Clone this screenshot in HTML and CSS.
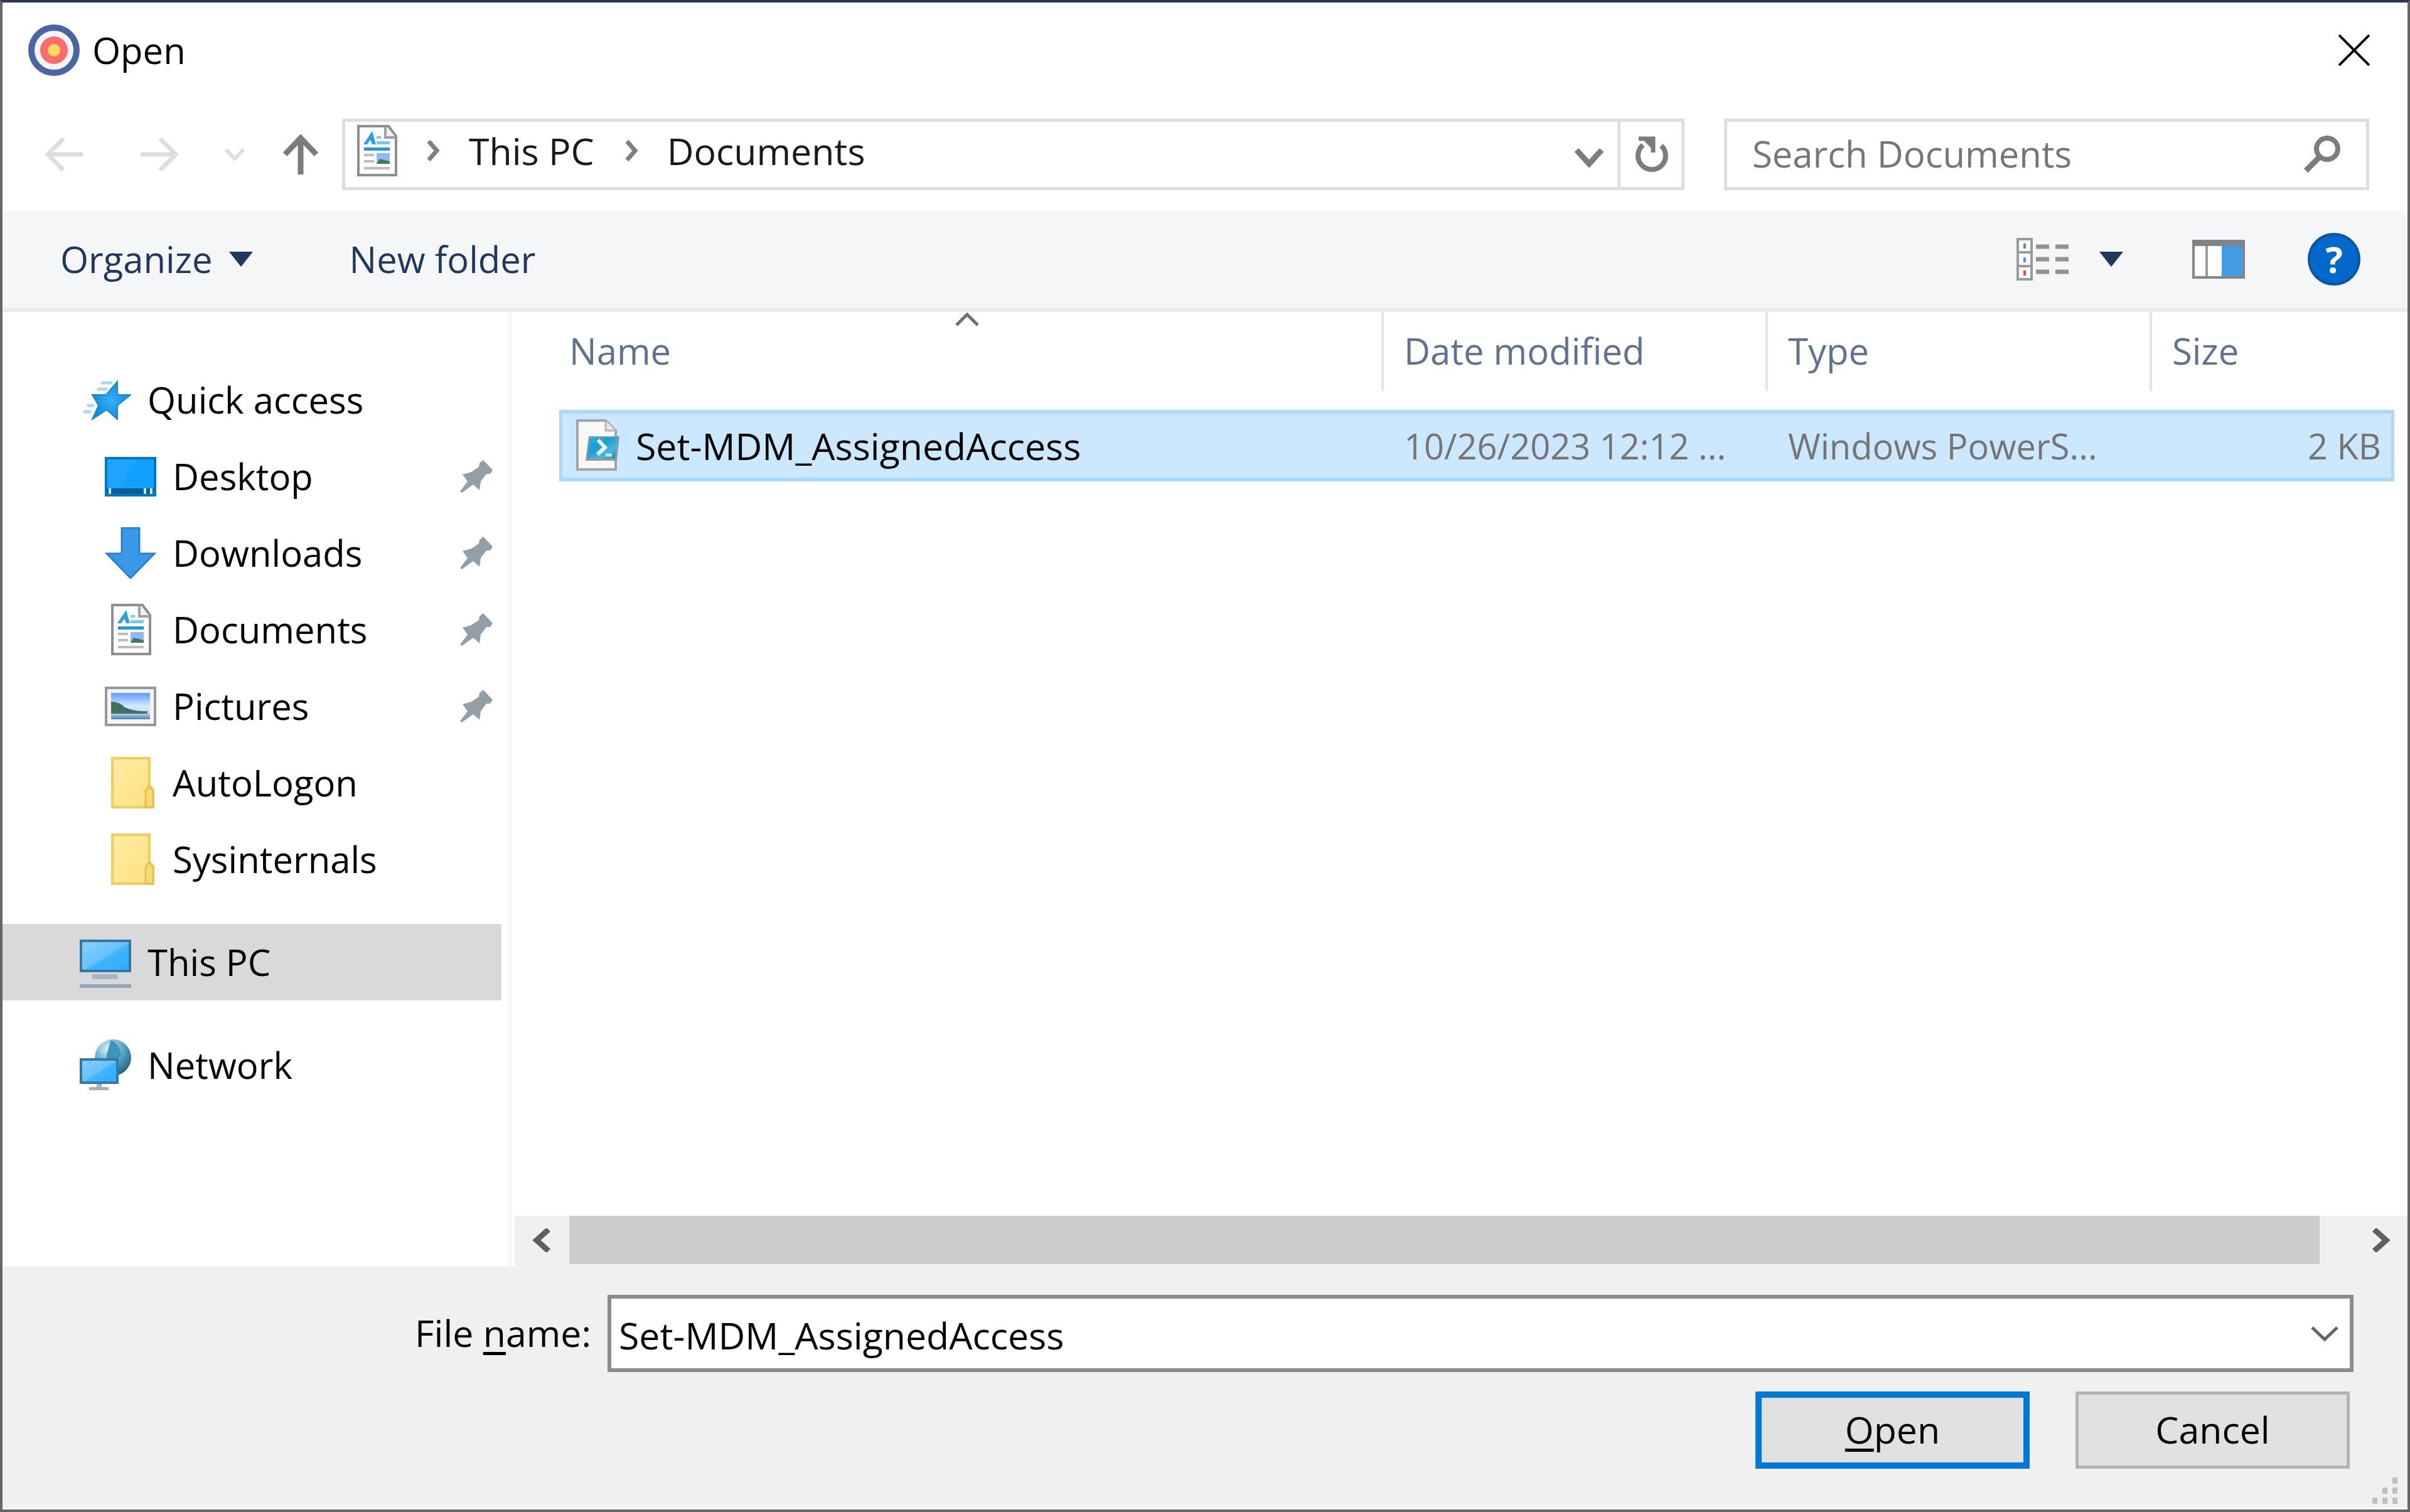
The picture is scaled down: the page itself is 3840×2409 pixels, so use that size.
FILE: index.html
```
<!DOCTYPE html>
<html lang="en">
<head>
    <meta charset="UTF-8">
    <meta name="viewport" content="width=device-width, initial-scale=1.0">
    <title>Open</title>
    <link rel="stylesheet" href="styles.css">
</head>
<body>
    <!-- Shared icons -->
    <svg class="sprite" aria-hidden="true">
        <defs>
            <linearGradient id="screen" x1="0" y1="0" x2="1" y2="1">
                <stop offset="0" stop-color="#8ad0ff"/>
                <stop offset="0.5" stop-color="#66c2ff"/>
                <stop offset="0.55" stop-color="#3fb4ff"/>
                <stop offset="1" stop-color="#2caaff"/>
            </linearGradient>
            <linearGradient id="sky" x1="0" y1="0" x2="0" y2="1">
                <stop offset="0" stop-color="#5c9bff"/>
                <stop offset="0.5" stop-color="#d3e8fc"/>
                <stop offset="0.75" stop-color="#c8e0f2"/>
                <stop offset="1" stop-color="#4a80b8"/>
            </linearGradient>
            <linearGradient id="folder" x1="0" y1="0" x2="1" y2="1">
                <stop offset="0" stop-color="#ffeba6"/>
                <stop offset="1" stop-color="#ffe07d"/>
            </linearGradient>
            <radialGradient id="globe" cx="0.35" cy="0.25" r="0.8">
                <stop offset="0" stop-color="#d6f0f5"/>
                <stop offset="0.5" stop-color="#5eaccd"/>
                <stop offset="1" stop-color="#20607e"/>
            </radialGradient>
            <radialGradient id="star" cx="0.5" cy="0.5" r="0.5">
                <stop offset="0" stop-color="#33b1ff"/>
                <stop offset="1" stop-color="#148bd4"/>
            </radialGradient>
            <linearGradient id="shell" x1="0" y1="0" x2="1" y2="1">
                <stop offset="0" stop-color="#2bb4dc"/>
                <stop offset="0.4" stop-color="#1a9fd0"/>
                <stop offset="0.7" stop-color="#48b8e0"/>
                <stop offset="1" stop-color="#0a86bd"/>
            </linearGradient>
        </defs>
        <symbol id="icon-document" viewBox="0 0 82 82">
            <path d="M12 2H60L72 18V80H12Z" fill="#fcfcfc" stroke="#8e8e8e" stroke-width="4"/>
            <path d="M55 2V20H72" fill="#f0f0f0" stroke="#a0a0a0" stroke-width="4"/>
            <path d="M20 31L34 10L40 31H34L31 24L26 31Z" fill="#2c9fe0"/>
            <path d="M41 18H48V22H41ZM41 26H62V31H41Z" fill="#7cc6f0"/>
            <path d="M21 36H62V41H21Z" fill="#2196dc"/>
            <path d="M21 46H37V50H21ZM21 56H37V60H21ZM21 67H62V71H21Z" fill="#bdbdbd"/>
            <path d="M41 45H62V62H41Z" fill="#8db8fa"/>
            <path d="M41 62L46 54L62 58V62Z" fill="#3f7a5c"/>
        </symbol>
        <symbol id="icon-folder" viewBox="0 0 82 82">
            <path d="M12 2H71V46L77 52V80H12Z" fill="url(#folder)" stroke="#efce5c" stroke-width="4"/>
            <path d="M65 80V54L70 46L77 54V80Z" fill="#f7da75" stroke="#e6c04c" stroke-width="3"/>
        </symbol>
        <symbol id="icon-pin" viewBox="0 0 52 52">
            <path d="M37 0L52 16L48 22H42L33 34L31 48L21 39L3 52L0 50L12 34L4 23L18 19L30 11L31 5Z" fill="#939fa6"/>
        </symbol>
        <symbol id="icon-crumb" viewBox="0 0 22 36">
            <path d="M4 3L17 18L4 33" fill="none" stroke="#808080" stroke-width="7"/>
        </symbol>
    </svg>

    <div class="dialog">
        <header class="title-bar">
            <svg class="icon" viewBox="0 0 82 82">
                <circle cx="41" cy="41" r="36" fill="#f3f5fb" stroke="#4a65a3" stroke-width="10"/>
                <circle cx="41" cy="41" r="22" fill="#ff6b6b"/>
                <circle cx="41" cy="41" r="10" fill="#ffd95c"/>
            </svg>
            <h1 class="title">Open</h1>
            <button class="icon-btn" aria-label="Close">
                <svg width="50" height="50" viewBox="0 0 50 50">
                    <path d="M1 1L49 49M49 1L1 49" stroke="#000" stroke-width="4"/>
                </svg>
            </button>
        </header>

        <div class="nav-bar">
            <div class="nav-buttons">
                <button class="icon-btn" aria-label="Back">
                    <svg width="60" height="58" viewBox="0 0 60 58">
                        <path d="M60 29H5M29 4L4 29L29 54" fill="none" stroke="#dedede" stroke-width="7"/>
                    </svg>
                </button>
                <button class="icon-btn back-gap" aria-label="Forward">
                    <svg width="60" height="58" viewBox="0 0 60 58">
                        <path d="M0 29H55M31 4L56 29L31 54" fill="none" stroke="#dedede" stroke-width="7"/>
                    </svg>
                </button>
                <button class="icon-btn recent-gap" aria-label="Recent locations">
                    <svg width="32" height="22" viewBox="0 0 32 22">
                        <path d="M2 3L16 18L30 3" fill="none" stroke="#dedede" stroke-width="6"/>
                    </svg>
                </button>
                <button class="icon-btn up-gap" aria-label="Up">
                    <svg width="58" height="64" viewBox="0 0 58 64">
                        <path d="M29 64V6M4 32L29 6L54 32" fill="none" stroke="#7c7c7c" stroke-width="9"/>
                    </svg>
                </button>
            </div>
            <div class="address">
                <nav class="crumbs">
                    <svg class="icon"><use href="#icon-document"/></svg>
                    <svg class="crumb-arrow"><use href="#icon-crumb"/></svg>
                    <a class="crumb" href="#">This PC</a>
                    <svg class="crumb-arrow"><use href="#icon-crumb"/></svg>
                    <a class="crumb" href="#">Documents</a>
                </nav>
                <button class="icon-btn address-drop" aria-label="Previous locations">
                    <svg width="48" height="34" viewBox="0 0 48 34">
                        <path d="M4 5L24 27L44 5" fill="none" stroke="#7c7c7c" stroke-width="9"/>
                    </svg>
                </button>
                <button class="icon-btn refresh" aria-label="Refresh">
                    <svg width="54" height="58" viewBox="0 0 54 58">
                        <path d="M43 15A22 22 0 1 1 14 14" fill="none" stroke="#7c7c7c" stroke-width="8"/>
                        <path d="M7 4H30V26" fill="none" stroke="#7c7c7c" stroke-width="7"/>
                        <path d="M12 4H30V22Z" fill="#7c7c7c"/>
                    </svg>
                </button>
            </div>
            <div class="search">
                <input class="search-input" type="text" placeholder="Search Documents" aria-label="Search Documents">
                <button class="icon-btn" aria-label="Search">
                    <svg width="60" height="60" viewBox="0 0 60 60">
                        <circle cx="38" cy="21" r="17" fill="none" stroke="#7c7c7c" stroke-width="8"/>
                        <path d="M26 34L4 56" stroke="#7c7c7c" stroke-width="9"/>
                    </svg>
                </button>
            </div>
        </div>

        <div class="toolbar">
            <button class="tool-btn">Organize
                <svg class="triangle" viewBox="0 0 38 24"><path d="M0 0H38L19 24Z" fill="#1e395b"/></svg>
            </button>
            <button class="tool-btn">New folder</button>
            <div class="view-tools">
                <button class="icon-btn view-btn" aria-label="Change your view">
                    <svg width="84" height="68" viewBox="0 0 84 68">
                        <path d="M2 2H24V66H2ZM2 23H24M2 45H24" fill="#fff" stroke="#9a9a9a" stroke-width="4"/>
                        <path d="M11 9H15V17H11Z" fill="#4d9c83"/>
                        <path d="M11 31H15V39H11Z" fill="#4f9cff"/>
                        <path d="M11 52H15V60H11Z" fill="#e84848"/>
                        <path d="M31 14H52M62 14H83M31 34H52M62 34H83M31 54H52M62 54H83" stroke="#929292" stroke-width="7"/>
                    </svg>
                    <svg class="triangle" viewBox="0 0 38 24"><path d="M0 0H38L19 24Z" fill="#1e395b"/></svg>
                </button>
                <button class="icon-btn" aria-label="Show the preview pane">
                    <svg width="84" height="62" viewBox="0 0 84 62">
                        <path d="M2 2H82V60H2Z" fill="#fff" stroke="#858585" stroke-width="4"/>
                        <path d="M0 0H84V10H0Z" fill="#7f8486"/>
                        <path d="M23 10V58" stroke="#9a9a9a" stroke-width="4"/>
                        <path d="M47 10H80V58H47Z" fill="#419ce4"/>
                    </svg>
                </button>
                <button class="help" aria-label="Get help">?</button>
            </div>
        </div>

        <main class="content">
            <nav class="sidebar">
                <a class="place" href="#">
                    <svg class="icon" viewBox="0 0 82 82">
                        <path d="M60 12V33H81L60 50V72L43 57L20 72L30 50L20 33H42Z" fill="url(#star)" stroke="#148bd4" stroke-width="2"/>
                        <path d="M34 14H52M28 24H44M12 50H23M6 60H18" stroke="#a8d8f5" stroke-width="5"/>
                    </svg>
                    Quick access
                </a>
                <a class="place nested" href="#">
                    <svg class="icon" viewBox="0 0 82 82">
                        <path d="M2 12H80V71H2Z" fill="#1fa5ff" stroke="#0077c2" stroke-width="4"/>
                        <path d="M50 14H78V58H26Z" fill="#12a0ff"/>
                        <path d="M4 60H78V69H4Z" fill="#055f9b"/>
                        <path d="M6 60H10V69H6ZM62 60H66V69H62ZM72 60H76V69H72Z" fill="#c8e8ff"/>
                    </svg>
                    Desktop
                    <svg class="pin"><use href="#icon-pin"/></svg>
                </a>
                <a class="place nested" href="#">
                    <svg class="icon" viewBox="0 0 82 82">
                        <path d="M27 1H55V42H79L41 81L3 42H27Z" fill="#3b98e8" stroke="#2c82d0" stroke-width="3"/>
                    </svg>
                    Downloads
                    <svg class="pin"><use href="#icon-pin"/></svg>
                </a>
                <a class="place nested" href="#">
                    <svg class="icon"><use href="#icon-document"/></svg>
                    Documents
                    <svg class="pin"><use href="#icon-pin"/></svg>
                </a>
                <a class="place nested" href="#">
                    <svg class="icon" viewBox="0 0 82 82">
                        <path d="M2 12H80V71H2Z" fill="#f4f4f4" stroke="#979797" stroke-width="4"/>
                        <path d="M10 20H72V62H10Z" fill="url(#sky)"/>
                        <path d="M10 34Q24 34 32 43Q48 50 68 49V53H10Z" fill="#3f7060"/>
                    </svg>
                    Pictures
                    <svg class="pin"><use href="#icon-pin"/></svg>
                </a>
                <a class="place nested" href="#">
                    <svg class="icon"><use href="#icon-folder"/></svg>
                    AutoLogon
                </a>
                <a class="place nested" href="#">
                    <svg class="icon"><use href="#icon-folder"/></svg>
                    Sysinternals
                </a>
                <a class="place root selected" href="#">
                    <svg class="icon" viewBox="0 0 82 82">
                        <path d="M2 7H80V55H2Z" fill="url(#screen)" stroke="#35789f" stroke-width="4"/>
                        <path d="M20 60H61V68H20Z" fill="#a9b5c2"/>
                        <path d="M0 76H82V82H0Z" fill="#94a6b8"/>
                    </svg>
                    This PC
                </a>
                <a class="place root" href="#">
                    <svg class="icon" viewBox="0 0 82 82">
                        <circle cx="53" cy="29" r="29" fill="url(#globe)"/>
                        <path d="M50 1Q64 8 66 26L54 36L42 28L46 14Z" fill="#3f93ba"/>
                        <path d="M2 32H60V69H2Z" fill="url(#screen)" stroke="#35789f" stroke-width="4"/>
                        <path d="M27 71H35V76H46V81H15V76H27Z" fill="#9fb0c0"/>
                    </svg>
                    Network
                </a>
            </nav>

            <section class="files">
                <table class="file-table">
                    <colgroup>
                        <col>
                        <col class="col-wide">
                        <col class="col-wide">
                        <col class="col-size">
                    </colgroup>
                    <thead>
                        <tr>
                            <th>
                                <div class="head-cell head-name">Name
                                    <svg class="sort-arrow" viewBox="0 0 38 24"><path d="M2 21L19 4L36 21" fill="none" stroke="#707070" stroke-width="5"/></svg>
                                </div>
                            </th>
                            <th><div class="head-cell">Date modified</div></th>
                            <th><div class="head-cell">Type</div></th>
                            <th><div class="head-cell head-last">Size</div></th>
                        </tr>
                    </thead>
                    <tbody>
                        <tr>
                            <td>
                                <div class="file-name">
                                    <svg width="70" height="84" viewBox="0 0 70 84">
                                        <path d="M3 2H48L64 18V80H3Z" fill="#f8f8f6" stroke="#a0a4a6" stroke-width="4"/>
                                        <path d="M48 2V18H64" fill="#e4e6e8" stroke="#b4b8ba" stroke-width="3"/>
                                        <path d="M21 27H70L66 66H16Z" fill="#8b9ba5"/>
                                        <path d="M23 29H67L63 62H19Z" fill="url(#shell)"/>
                                        <path d="M36 33L47 45L35 56" fill="none" stroke="#f2fbff" stroke-width="6"/>
                                        <path d="M48 57H58" stroke="#bfe6f5" stroke-width="5"/>
                                    </svg>
                                    Set-MDM_AssignedAccess
                                </div>
                            </td>
                            <td class="meta">10/26/2023 12:12 ...</td>
                            <td class="meta">Windows PowerS...</td>
                            <td class="meta size">2 KB</td>
                        </tr>
                    </tbody>
                </table>

                <div class="scrollbar">
                    <button class="icon-btn scroll-btn" aria-label="Scroll left">
                        <svg width="32" height="38" viewBox="0 0 32 38">
                            <path d="M28 2L9 19L28 36" fill="none" stroke="#606060" stroke-width="9"/>
                        </svg>
                    </button>
                    <div class="scroll-track"><div class="scroll-thumb"></div></div>
                    <button class="icon-btn scroll-btn" aria-label="Scroll right">
                        <svg width="32" height="38" viewBox="0 0 32 38">
                            <path d="M4 2L23 19L4 36" fill="none" stroke="#606060" stroke-width="9"/>
                        </svg>
                    </button>
                </div>
            </section>
        </main>

        <footer class="footer">
            <div class="file-field">
                <label class="file-label" for="file-name">File <u>n</u>ame:</label>
                <div class="combo">
                    <input class="combo-input" id="file-name" type="text" value="Set-MDM_AssignedAccess" spellcheck="false">
                    <button class="icon-btn" aria-label="Show recent names">
                        <svg width="44" height="26" viewBox="0 0 44 26">
                            <path d="M2 3L22 22L42 3" fill="none" stroke="#666" stroke-width="5"/>
                        </svg>
                    </button>
                </div>
            </div>
            <div class="actions">
                <button class="btn btn-default"><u>O</u>pen</button>
                <button class="btn">Cancel</button>
            </div>
            <svg class="grip" viewBox="0 0 42 44">
                <path d="M32 0H40V10H32ZM16 16H24V26H16ZM32 16H40V26H32ZM0 32H8V42H0ZM16 32H24V42H16ZM32 32H40V42H32Z" fill="#bfbfbf"/>
            </svg>
        </footer>
    </div>
</body>
</html>
```

FILE: styles.css
```
* {
    margin: 0;
    padding: 0;
    box-sizing: border-box;
}

body {
    font-family: 'Open Sans', 'Noto Sans', sans-serif;
    font-size: 59px;
    line-height: 80px;
    color: #000;
    background: #fff;
}

button,
input {
    font: inherit;
    color: inherit;
    background: none;
    border: none;
    outline: none;
}

a {
    color: inherit;
    text-decoration: none;
}

svg {
    display: block;
    flex: none;
}

u {
    text-decoration-thickness: 5px;
    text-underline-offset: 8px;
}

.sprite {
    position: absolute;
    width: 0;
    height: 0;
}

.icon {
    width: 82px;
    height: 82px;
}

.icon-btn {
    display: flex;
    align-items: center;
    justify-content: center;
    flex: none;
}

.dialog {
    display: flex;
    flex-direction: column;
    min-height: 100vh;
    border: 4px solid #666;
    border-top-color: #2c3a4e;
}

/* Title bar */
.title-bar {
    display: flex;
    align-items: center;
    height: 152px;
    padding: 0 60px 0 41px;
}

.title {
    flex: 1;
    margin-left: 20px;
    font-size: 58px;
    font-weight: 400;
}

/* Navigation */
.nav-bar {
    display: flex;
    align-items: center;
    height: 180px;
    padding: 0 61px 0 68px;
}

.nav-buttons {
    display: flex;
    align-items: center;
    width: 473px;
}

.back-gap {
    margin-left: 92px;
}

.recent-gap {
    margin-left: 74px;
}

.up-gap {
    margin-left: 60px;
}

.address,
.search {
    display: flex;
    align-items: center;
    height: 114px;
    border: 5px solid #dedede;
}

.address {
    flex: 1;
    color: #191919;
}

.crumbs {
    display: flex;
    align-items: center;
    flex: 1;
    padding: 0 0 12px 9px;
}

.crumb {
    margin-right: 48px;
}

.crumb-arrow {
    width: 22px;
    height: 36px;
    margin-right: 46px;
}

.crumbs .icon + .crumb-arrow {
    margin-left: 38px;
}

.address-drop {
    width: 90px;
    padding-top: 10px;
}

.refresh {
    width: 102px;
    height: 104px;
    border-left: 5px solid #dedede;
}

.search {
    width: 1028px;
    margin-left: 63px;
    padding: 0 40px;
    font-size: 58px;
}

.search-input {
    flex: 1;
    min-width: 0;
    height: 100px;
    padding-bottom: 4px;
}

.search-input::placeholder {
    color: #767676;
    opacity: 1;
}

/* Command bar */
.toolbar {
    display: flex;
    align-items: center;
    height: 161px;
    padding: 0 75px 0 92px;
    background: #f4f6f8;
    border-bottom: 7px solid #e9ecef;
    color: #1e395b;
    font-size: 58px;
}

.tool-btn {
    display: flex;
    align-items: center;
    gap: 26px;
    margin-right: 154px;
}

.triangle {
    width: 38px;
    height: 24px;
}

.view-tools {
    display: flex;
    align-items: center;
    margin-left: auto;
}

.view-btn {
    gap: 48px;
    margin-right: 110px;
}

.help {
    width: 84px;
    height: 84px;
    margin-left: 100px;
    border: 4px solid #0a559f;
    border-radius: 50%;
    background: #0069cb;
    color: #fff;
    font-weight: 700;
    line-height: 76px;
}

/* Places */
.content {
    display: flex;
    flex: 1;
}

.sidebar {
    width: 812px;
    padding-top: 79px;
    border-right: 6px solid #f8f8f8;
    font-size: 58px;
}

.place {
    display: flex;
    align-items: center;
    gap: 26px;
    height: 122px;
    margin-right: 11px;
    padding: 0 14px 0 123px;
}

.nested {
    padding-left: 163px;
}

.root {
    margin-top: 42px;
}

.selected {
    background: #d9d9d9;
}

.pin {
    width: 52px;
    height: 52px;
    margin-left: auto;
}

/* File list */
.files {
    display: flex;
    flex-direction: column;
    flex: 1;
    min-width: 0;
}

.file-table {
    width: calc(100% - 96px);
    margin-left: 75px;
    table-layout: fixed;
    border-collapse: separate;
    border-spacing: 0;
}

.col-wide {
    width: 612px;
}

.col-size {
    width: 386px;
}

.file-table th {
    height: 156px;
    vertical-align: top;
    font-size: 58px;
    font-weight: 400;
    text-align: left;
    color: #5f7290;
}

.head-cell {
    position: relative;
    height: 126px;
    padding-left: 32px;
    border-right: 4px solid #e5e5e5;
    line-height: 124px;
}

.head-name {
    margin-left: -11px;
    padding-left: 27px;
}

.head-last {
    border-right: none;
}

.sort-arrow {
    position: absolute;
    top: 0;
    left: 50%;
    width: 38px;
    height: 24px;
    transform: translateX(-50%);
}

.file-table td {
    height: 114px;
    background: #cce8ff;
    border: 0 solid #a9d9ff;
    border-width: 6px 0;
}

.file-table td:first-child {
    border-left-width: 5px;
}

.file-table td:last-child {
    border-right-width: 5px;
}

.file-name {
    display: flex;
    align-items: center;
    gap: 26px;
    padding-left: 21px;
}

.file-table .meta {
    padding-left: 32px;
    color: #757575;
    font-size: 56px;
    white-space: nowrap;
}

.file-table .size {
    padding-right: 16px;
    text-align: right;
}

.scrollbar {
    display: flex;
    height: 81px;
    margin-top: auto;
    margin-left: 4px;
    padding-bottom: 4px;
    background: #f0f0f0;
}

.scroll-btn {
    width: 83px;
}

.scroll-track {
    flex: 1;
    padding-left: 4px;
}

.scroll-thumb {
    width: 98%;
    height: 100%;
    background: #cdcdcd;
}

/* File name and actions */
.footer {
    position: relative;
    padding: 45px 86px 62px;
    background: #f0f0f0;
    border-bottom: 3px solid #fafafa;
}

.file-field {
    display: flex;
    align-items: center;
}

.file-label {
    width: 878px;
    padding-right: 26px;
    padding-bottom: 4px;
    text-align: right;
}

.combo {
    display: flex;
    align-items: center;
    flex: 1;
    height: 123px;
    padding: 0 18px 0 12px;
    background: #fff;
    border: 6px solid #8c8c8c;
}

.combo-input {
    flex: 1;
    min-width: 0;
    height: 111px;
    padding-top: 4px;
}

.actions {
    display: flex;
    justify-content: flex-end;
    gap: 73px;
    margin-top: 31px;
    padding-right: 6px;
}

.btn {
    width: 437px;
    height: 123px;
    padding-bottom: 4px;
    background: #e1e1e1;
    border: 5px solid #b3b3b3;
}

.btn-default {
    border: 10px solid #0078d9;
}

/* Resize handle in the window corner */
.grip {
    position: absolute;
    right: 14px;
    bottom: 4px;
    width: 42px;
    height: 44px;
}
```
